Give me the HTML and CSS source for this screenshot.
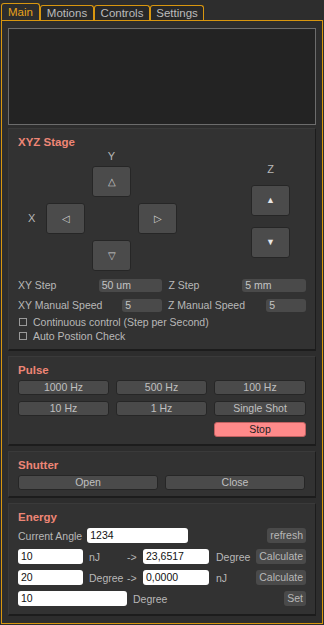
FILE: index.html
```html
<!DOCTYPE html>
<html lang="en">
<head>
    <meta charset="UTF-8">
    <meta name="viewport" content="width=device-width, initial-scale=1.0">
    <title>Stage Control</title>
    <link rel="stylesheet" href="styles.css">
</head>
<body>
    <div class="tabs">
        <div class="tab active" style="width:39px">Main</div>
        <div class="tab" style="width:54px">Motions</div>
        <div class="tab" style="width:56px">Controls</div>
        <div class="tab" style="width:54px">Settings</div>
    </div>

    <div class="panel">
        <div class="log-box"></div>

        <div class="group xyz">
            <div class="group-title">XYZ Stage</div>
            <div class="stage-row">
                <div class="dpad">
                    <span class="axis y-label">Y</span>
                    <span class="axis x-label">X</span>
                    <button class="pad-btn up">&#9651;</button>
                    <button class="pad-btn left">&#9665;</button>
                    <button class="pad-btn right">&#9655;</button>
                    <button class="pad-btn down">&#9661;</button>
                </div>
                <div class="zpad">
                    <span class="axis">Z</span>
                    <button class="pad-btn">&#9650;</button>
                    <button class="pad-btn">&#9660;</button>
                </div>
            </div>
            <div class="field-row">
                <span class="lbl w-xy">XY Step</span>
                <span class="gray-input" style="width:64px">50 um</span>
                <span class="lbl w-z">Z Step</span>
                <span class="gray-input" style="width:64px">5 mm</span>
            </div>
            <div class="field-row">
                <span class="lbl w-xy2">XY Manual Speed</span>
                <span class="gray-input" style="width:40px">5</span>
                <span class="lbl w-z2">Z Manual Speed</span>
                <span class="gray-input" style="width:40px">5</span>
            </div>
            <label class="check"><span class="box"></span>Continuous control (Step per Second)</label>
            <label class="check"><span class="box"></span>Auto Postion Check</label>
        </div>

        <div class="group pulse">
            <div class="group-title">Pulse</div>
            <div class="btn-grid">
                <button class="flat-btn">1000 Hz</button>
                <button class="flat-btn">500 Hz</button>
                <button class="flat-btn">100 Hz</button>
                <button class="flat-btn">10 Hz</button>
                <button class="flat-btn">1 Hz</button>
                <button class="flat-btn">Single Shot</button>
                <button class="flat-btn stop">Stop</button>
            </div>
        </div>

        <div class="group shutter">
            <div class="group-title">Shutter</div>
            <div class="btn-pair">
                <button class="flat-btn">Open</button>
                <button class="flat-btn">Close</button>
            </div>
        </div>

        <div class="group energy">
            <div class="group-title">Energy</div>
            <div class="e-row">
                <span class="lbl">Current Angle</span>
                <span class="white-input" style="width:101px">1234</span>
                <button class="small-btn push">refresh</button>
            </div>
            <div class="e-row">
                <span class="white-input" style="width:65px">10</span>
                <span class="lbl e-unit">nJ</span>
                <span class="lbl e-arrow">-&gt;</span>
                <span class="white-input" style="width:66px">23,6517</span>
                <span class="lbl e-unit2">Degree</span>
                <button class="small-btn push">Calculate</button>
            </div>
            <div class="e-row">
                <span class="white-input" style="width:65px">20</span>
                <span class="lbl e-unit">Degree</span>
                <span class="lbl e-arrow">-&gt;</span>
                <span class="white-input" style="width:66px">0,0000</span>
                <span class="lbl e-unit2">nJ</span>
                <button class="small-btn push">Calculate</button>
            </div>
            <div class="e-row">
                <span class="white-input" style="width:109px">10</span>
                <span class="lbl e-unit">Degree</span>
                <button class="small-btn push">Set</button>
            </div>
        </div>
    </div>
</body>
</html>
```

FILE: styles.css
```css
body {
    margin: 0;
    background-color: #2d2d2d;
    font-family: "Liberation Sans", Arial, sans-serif;
    font-size: 10.5px;
    color: #b8b8b8;
    width: 324px;
    height: 625px;
    overflow: hidden;
}

button {
    font-family: inherit;
    font-size: 10.5px;
    padding: 0;
    cursor: pointer;
}

.tabs {
    display: flex;
    align-items: flex-end;
    height: 20px;
    padding-left: 1px;
}

.tab {
    box-sizing: border-box;
    height: 15px;
    border: 1px solid #d8960f;
    border-bottom: none;
    border-radius: 3px 3px 0 0;
    background-color: #282828;
    color: #bcbcbc;
    font-size: 11.5px;
    text-align: center;
    line-height: 14px;
}

.tab.active {
    height: 17px;
    background-color: #2d2d2d;
    color: #e8a21a;
    line-height: 17px;
}

.panel {
    box-sizing: border-box;
    width: 322px;
    height: 604px;
    margin-left: 1px;
    border: 1px solid #d8960f;
    padding: 7px 6px 0 6px;
    display: flex;
    flex-direction: column;
    gap: 5px;
}

.log-box {
    box-sizing: border-box;
    height: 97px;
    margin-bottom: -2px;
    background-color: #232323;
    border: 1px solid #6c6c6c;
}

.group {
    box-sizing: border-box;
    background-color: #323232;
    border-top: 1px solid #3a3a3a;
    border-left: 1px solid #3a3a3a;
    border-right: 1px solid #1c1c1c;
    border-bottom: 2px solid #1c1c1c;
    padding: 6px 9px 0 9px;
}

.group-title {
    color: #ee8676;
    font-weight: bold;
    font-size: 11.5px;
    height: 15px;
    line-height: 15px;
}

.xyz { height: 223px; }
.pulse { height: 90px; }
.shutter { height: 47px; }
.energy { height: 113px; }

/* stage pads */
.stage-row {
    display: flex;
    height: 125px;
}

.dpad {
    display: grid;
    grid-template-columns: 20px 39px 7px 39px 7px 39px;
    grid-template-rows: 16px 31px 6px 31px 6px 31px;
    margin-left: 8px;
}

.axis {
    color: #b8b8b8;
    font-size: 11px;
    text-align: center;
}

.y-label { grid-column: 4; grid-row: 1; line-height: 12px; }
.x-label { grid-column: 1; grid-row: 4; line-height: 31px; text-align: left; padding-left: 2px; }
.up { grid-column: 4; grid-row: 2; }
.left { grid-column: 2; grid-row: 4; }
.right { grid-column: 6; grid-row: 4; }
.down { grid-column: 4; grid-row: 6; }

.pad-btn {
    box-sizing: border-box;
    width: 39px;
    height: 31px;
    background-color: #4b4b4b;
    border: 1px solid #262626;
    border-radius: 3px;
    color: #cfcfcf;
    font-size: 10px;
    line-height: 29px;
}

.zpad {
    margin-left: auto;
    margin-right: 16px;
    display: flex;
    flex-direction: column;
    gap: 11px;
    padding-top: 13px;
}

.zpad .axis {
    height: 12px;
    line-height: 12px;
    margin-bottom: -1px;
}

.zpad .pad-btn {
    height: 31px;
    font-size: 9px;
    color: #e6e6e6;
}

/* step fields */
.field-row {
    display: flex;
    align-items: center;
    height: 20px;
}

.lbl {
    white-space: nowrap;
    color: #b8b8b8;
}

.w-xy { width: 81px; }
.w-z { width: 74px; margin-left: 6px; }
.w-xy2 { width: 105px; }
.w-z2 { width: 99px; margin-left: 6px; }

.gray-input {
    box-sizing: border-box;
    height: 13px;
    line-height: 13px;
    padding-left: 3px;
    background-color: #4a4a4a;
    border-radius: 3px;
    color: #c4c4c4;
}

.check {
    display: flex;
    align-items: center;
    height: 14px;
    padding-left: 1px;
    color: #b8b8b8;
}

.box {
    box-sizing: border-box;
    width: 8px;
    height: 8px;
    border: 1px solid #9a9a9a;
    margin-right: 6px;
}

/* pulse / shutter buttons */
.btn-grid {
    display: grid;
    grid-template-columns: 91px 91px 92px;
    column-gap: 7px;
    row-gap: 6px;
    margin-top: 2px;
}

.flat-btn {
    height: 15px;
    background-color: #4a4a4a;
    border: 1px solid #262626;
    border-radius: 3px;
    color: #c0c0c0;
    line-height: 13px;
}

.flat-btn.stop {
    grid-column: 3;
    background-color: #ff8a8a;
    border-color: #c06060;
    color: #222;
}

.btn-pair {
    display: grid;
    grid-template-columns: 140px 140px;
    column-gap: 7px;
    margin-top: 2px;
}

/* energy */
.e-row {
    display: flex;
    align-items: center;
    height: 21px;
}

.white-input {
    box-sizing: border-box;
    height: 15px;
    line-height: 15px;
    padding-left: 3px;
    background-color: #ffffff;
    border-radius: 3px;
    color: #111;
    margin-right: 6px;
}

.e-row .lbl:first-child { margin-right: 5px; }
.e-unit { width: 38px; }
.e-arrow { width: 16px; }
.e-unit2 { width: 38px; margin-left: 1px; }

.small-btn {
    height: 15px;
    padding: 0 3px;
    background-color: #4a4a4a;
    border: none;
    border-radius: 3px;
    color: #b8b8b8;
    line-height: 15px;
}

.push { margin-left: auto; }
```
